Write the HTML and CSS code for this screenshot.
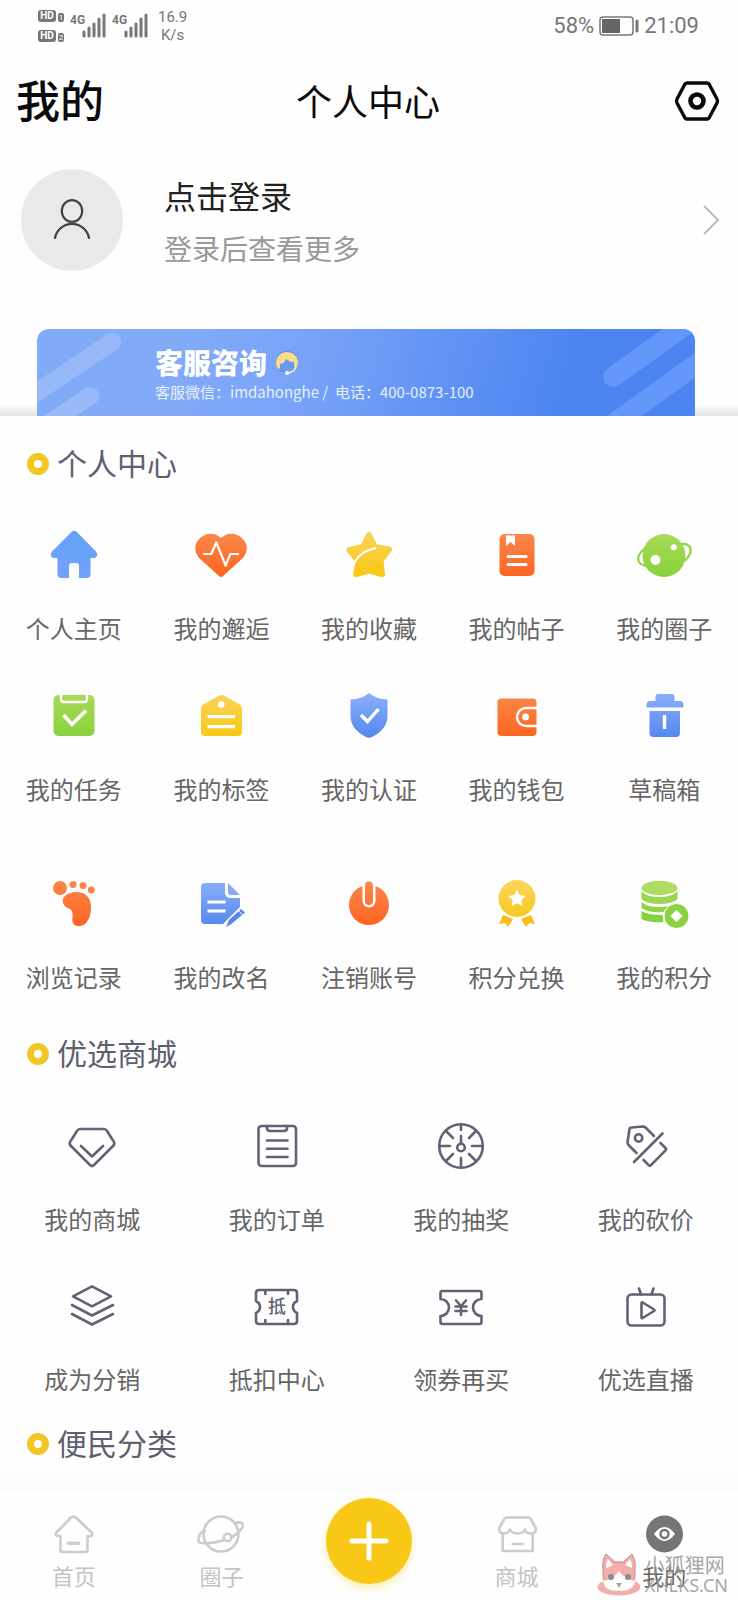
FILE: index.html
```html
<!DOCTYPE html>
<html lang="zh-CN">
<head>
<meta charset="utf-8">
<meta name="viewport" content="width=device-width, initial-scale=1">
<title>个人中心</title>
<link rel="stylesheet" href="styles.css">
</head>
<body>
<svg class="defs" width="0" height="0" aria-hidden="true">
  <defs>
    <linearGradient id="blue" x1="0" y1="0" x2="0" y2="56" gradientUnits="userSpaceOnUse"><stop offset="0" stop-color="#92b3fa"/><stop offset="1" stop-color="#4d82ee"/></linearGradient>
    <linearGradient id="sky" x1="0" y1="0" x2="0" y2="56" gradientUnits="userSpaceOnUse"><stop offset="0" stop-color="#5ea4f8"/><stop offset="1" stop-color="#77a0fb"/></linearGradient>
    <linearGradient id="orange" x1="0" y1="0" x2="0" y2="56" gradientUnits="userSpaceOnUse"><stop offset="0" stop-color="#fb8c50"/><stop offset="1" stop-color="#fd5f1b"/></linearGradient>
    <linearGradient id="yellow" x1="0" y1="0" x2="0" y2="56" gradientUnits="userSpaceOnUse"><stop offset="0" stop-color="#fad662"/><stop offset="1" stop-color="#f8c50b"/></linearGradient>
    <linearGradient id="green" x1="0" y1="0" x2="0" y2="56" gradientUnits="userSpaceOnUse"><stop offset="0" stop-color="#aedb5d"/><stop offset="1" stop-color="#83d138"/></linearGradient>
  </defs>
</svg>
<div class="page">
  <div class="status">
    <div class="hd"><span><b>HD</b><i>1</i></span><span><b>HD</b><i>2</i></span></div>
    <div class="signal"><span>4G</span><svg width="24" height="24" viewBox="0 0 24 24"><path d="M2 18v4M7 14v8M12 10v12M17 5v17M22 1v21"/></svg></div>
    <div class="signal"><span>4G</span><svg width="24" height="24" viewBox="0 0 24 24"><path d="M2 18v4M7 14v8M12 10v12M17 5v17M22 1v21"/></svg></div>
    <div class="speed">16.9<br>K/s</div>
    <div class="power"><span>58%</span>
      <svg width="40" height="20" viewBox="0 0 40 20"><rect x="1" y="1" width="33" height="18" rx="3" fill="none" stroke="#777" stroke-width="1.5"/><rect x="3" y="3" width="18" height="14" fill="#666"/><path d="M38 5v10" stroke="#777" stroke-width="3" stroke-linecap="round"/></svg>
      <span>21:09</span></div>
  </div>

  <header class="header">
    <div class="header-name">我的</div>
    <h1>个人中心</h1>
    <button class="settings" aria-label="设置"><svg width="46" height="42" viewBox="0 0 46 42" fill="none" stroke="#0a0a0a" stroke-linejoin="round"><path d="M13 3h20q1 0 2 1l8 15q1 2 0 4l-8 15q-1 1-2 1H13q-1 0-2-1L3 23q-1-2 0-4l8-15q1-1 2-1z" stroke-width="3.4"/><circle cx="23" cy="21" r="6.500" stroke-width="4.600"/></svg></button>
  </header>

  <a class="profile" href="#login">
    <span class="avatar"><svg width="42" height="44" viewBox="0 0 42 44" fill="none" stroke="#444" stroke-width="2.2" stroke-linecap="round"><ellipse cx="21" cy="13" rx="10.2" ry="10.8"/><path d="M4 40a17.300 17.300 0 0 1 34 0"/></svg></span>
    <span class="who"><strong>点击登录</strong><span>登录后查看更多</span></span>
    <svg class="arrow" width="18" height="32" viewBox="0 0 18 32" fill="none" stroke="#bbb" stroke-width="2"><path d="M2 2l14 14L2 30"/></svg>
  </a>

  <section class="banner-wrap">
    <div class="banner">
      <svg class="stripes left" width="90" height="87" viewBox="0 0 90 87" stroke="#97b9fa" stroke-width="18" stroke-linecap="round"><path d="M75 13L-25 80M53 67L-25 119"/></svg>
      <svg class="stripes right" width="100" height="87" viewBox="0 0 100 87" stroke="#6397fa" stroke-width="20" stroke-linecap="round"><path d="M18 48L110-18M14 98L114 26"/></svg>
      <div class="banner-title"><span>客服咨询</span>
        <svg width="24" height="26" viewBox="0 0 24 26"><circle cx="12" cy="13" r="11" fill="#5d92e9"/><path d="M1 14a11 11 0 0 1 22 0l-2 6q-2 0-2-7-5 0-8-3-1 5-6 5v5Q1 19 1 14z" fill="#fbdc8a"/><path d="M5 15q5 0 6-5 3 4 8 3 0 9-7 10-6-1-7-8z" fill="#6b9af0"/><path d="M21 17q-1 6-8 7" fill="none" stroke="#fbe7b8" stroke-width="1.6"/><circle cx="12" cy="24" r="2" fill="#fff"/></svg>
      </div>
      <p>客服微信：imdahonghe /&nbsp; 电话：400-0873-100</p>
    </div>
  </section>

  <main>
    <h2>个人中心</h2>
    <ul class="grid five">
      <li><a href="#"><svg viewBox="0 0 56 56"><path fill="url(#sky)" d="M25.500 5q2.700-2.500 5.400 0L50 24.500q3 4-1 6.500h-4.500v16q0 4-4 4H33V39q0-3-3-3h-4q-3 0-3 3v12h-7.500q-4 0-4-4V31H7q-4-2.500-1-6.500z"/></svg>个人主页</a></li>
      <li><a href="#"><svg viewBox="0 0 56 56"><path fill="url(#orange)" d="M28 11C34 5 43 5.500 49 11q9 9 1 20L30 49q-2 2-4 0L6 31Q-2 20 7 11c6-5.500 15-6 21 0z"/><path d="M11 27h7.300l5-11.500 9.300 23L37.300 27H45" fill="none" stroke="#fff" stroke-width="2.200" stroke-linejoin="round" stroke-linecap="round"/></svg>我的邂逅</a></li>
      <li><a href="#"><svg viewBox="0 0 56 56"><path fill="url(#yellow)" stroke="url(#yellow)" stroke-width="6" stroke-linejoin="round" d="M28 8l6 12L48 22.500l-8.500 11L41 47l-13-3.500L15 47l2-13L8.500 23 22 20z"/><path d="M11 46q1-20 24-25" fill="none" stroke="#fff" stroke-width="2"/></svg>我的收藏</a></li>
      <li><a href="#"><svg viewBox="0 0 56 56"><rect x="10.500" y="7" width="35" height="42" rx="5" fill="url(#orange)"/><path d="M17 8.500h9V19l-4.500-4L17 19z" fill="#fff"/><path d="M19 29.500h18M19 37.500h18" stroke="#fff" stroke-width="3" stroke-linecap="round"/></svg>我的帖子</a></li>
      <li><a href="#"><svg viewBox="0 0 56 56"><circle cx="28" cy="28.500" r="21.500" fill="url(#green)"/><g fill="none" stroke="#8ed443" stroke-width="2.200"><path d="M8 22q-7 6-5.500 12 1 4 9.500 5M45 17q7-1 9.500 4 1.500 6-6 13"/></g><circle cx="19.500" cy="33" r="5" fill="#fff"/><circle cx="37.800" cy="20.300" r="3" fill="#fff"/></svg>我的圈子</a></li>
      <li><a href="#"><svg viewBox="0 0 56 56"><rect x="7.500" y="7" width="41" height="41" rx="5" fill="url(#green)"/><path d="M15 7v4q0 3 3 3h20q3 0 3-3V7" fill="none" stroke="#fff" stroke-width="2.400"/><path d="M17.500 27l8.500 9.500L40 22.500" fill="none" stroke="#fff" stroke-width="3.600"/></svg>我的任务</a></li>
      <li><a href="#"><svg viewBox="0 0 56 56"><path fill="url(#yellow)" d="M25.500 8q3-2 6 0L46 16q3 1.500 3 5v23q0 4-4 4H12q-4 0-4-4V21q0-3.500 3-5z"/><circle cx="28.300" cy="16.500" r="3.300" fill="#fff"/><path d="M14.500 28.700H42M14.500 38.700H42" stroke="#fff" stroke-width="3.200"/></svg>我的标签</a></li>
      <li><a href="#"><svg viewBox="0 0 56 56"><path fill="url(#blue)" d="M28 5q7 6 18.500 6.500V28q0 13-15.500 21-3 1.500-6 0Q9.500 41 9.500 28V11.500Q21 11 28 5z"/><path d="M20 27l6.500 6.500L37.500 21" fill="none" stroke="#fff" stroke-width="3.400"/></svg>我的认证</a></li>
      <li><a href="#"><svg viewBox="0 0 56 56"><rect x="8.500" y="10.500" width="39" height="37.500" rx="4" fill="url(#orange)"/><path d="M48 20H37a9 9 0 0 0 0 18h11" fill="none" stroke="#fff" stroke-width="2.400"/><circle cx="36.500" cy="29" r="3.500" fill="#fff"/></svg>我的钱包</a></li>
      <li><a href="#"><svg viewBox="0 0 56 56"><path fill="url(#blue)" d="M19.500 13V9q0-3 3-3h13q3 0 3 3v4h5q4 0 4 4v2.500h-37V17q0-4 4-4zM13.500 23h30.500v22q0 4-4 4H17.500q-4 0-4-4z"/><path d="M28.500 27v14" stroke="#fff" stroke-width="3.400"/></svg>草稿箱</a></li>
    </ul>
    <ul class="grid five last">
      <li><a href="#"><svg viewBox="0 0 56 56" fill="url(#orange)"><circle cx="14" cy="12" r="7"/><circle cx="27" cy="8.500" r="3.500"/><circle cx="37" cy="9.500" r="3.500"/><circle cx="45.300" cy="14" r="3.400"/><path d="M30 16c10 0 15 6 15 15 0 7-2 13-6 17-4 3-10 3-12-1-2-5 2-10-3-14-8-2-9-10-5-13 3-3 7-4 11-4z"/></svg>浏览记录</a></li>
      <li><a href="#"><svg viewBox="0 0 56 56"><path fill="url(#blue)" d="M12 7h20v9q0 6 6 6h9v9L30 48H12q-4 0-4-4V11q0-4 4-4z"/><path d="M35 7l12 12h-9q-3 0-3-3z" fill="#88a9f6"/><path d="M14.500 26h18M14.500 35h18" stroke="#fff" stroke-width="2.800"/><path d="M33 51l3-7 12-11 4 3.500-13 11z" fill="#5486ee"/><path d="M45.500 34.500l4 4.500" stroke="#fff"/></svg>我的改名</a></li>
      <li><a href="#"><svg viewBox="0 0 56 56"><circle cx="28" cy="29" r="20" fill="url(#orange)"/><path d="M21.500 5v20a6.500 6.500 0 0 0 13 0V5z" fill="#fff"/><path d="M24 9.500a4 4 0 0 1 8 0V25a4 4 0 0 1-8 0z" fill="url(#orange)"/></svg>注销账号</a></li>
      <li><a href="#"><svg viewBox="0 0 56 56"><circle cx="28" cy="22.500" r="18.500" fill="url(#yellow)"/><path d="M28 13.500l2.700 5.500 6 .9-4.300 4.200 1 6-5.400-2.900-5.400 2.900 1-6-4.300-4.200 6-.9z" fill="#fff"/><path fill="#f9bd18" d="M14 39l10 4-5 8-3-4-6 1zM42 39l-10 4 5 8 3-4 6 1z"/></svg>积分兑换</a></li>
      <li><a href="#"><svg viewBox="0 0 56 56"><ellipse cx="23.500" cy="12" rx="18" ry="7.200" fill="#afdc61"/><path fill="#9cd650" d="M5.500 15q5 6 18 6t18-6v8q-5 5-18 5t-18-5z"/><path fill="#90d446" d="M5.500 26q5 5 18 5 9 0 15-3-8 2-11 8-16 1-22-4z"/><path fill="#86cf3d" d="M5.500 35q6 4 21 4l1 7q-14 1-22-3z"/><circle cx="40.500" cy="40" r="12.500" fill="#8ad243" stroke="#fff" stroke-width="1"/><path d="M40.500 34l6 6-6 6-6-6z" fill="#fff"/></svg>我的积分</a></li>
    </ul>

    <h2>优选商城</h2>
    <ul class="grid four line">
      <li><a href="#"><svg viewBox="0 0 56 56"><path d="M16 11h24q2 0 3 2l7 11q1 2-1 4L30 47q-2 2-4 0L7 28q-2-2-1-4l7-11q1-2 3-2zM17 28l11 10.500L39 28"/></svg>我的商城</a></li>
      <li><a href="#"><svg viewBox="0 0 56 56"><rect x="9.500" y="8" width="37.500" height="40" rx="3"/><path d="M18 8v2q0 3 3 3h14q3 0 3-3V8M18 22.500h20.500M18 30.700h20.500M18 39h20.500"/></svg>我的订单</a></li>
      <li><a href="#"><svg viewBox="0 0 56 56"><circle cx="28" cy="28" r="21.800"/><circle cx="28" cy="29.500" r="3.800"/><path d="M28 25.500V18M28 6v6M28 40v9M7 28h10M39 28h10M13 13l7 7M43 13l-7 7M13 43l7-7M43 43l-7-7"/></svg>我的抽奖</a></li>
      <li><a href="#"><svg viewBox="0 0 56 56"><path d="M36 18l-8.500-8.500q-1-1-3-1l-11 1q-2 0-2 2L9.500 24q0 2 1 3l8 8M16 44l28.500-28.500M42.500 25l5 5q1.200 1.200 0 2.400L33 47.200q-1.200 1.200-2.400 0L25.600 42"/><circle cx="20.600" cy="20" r="3.700"/></svg>我的砍价</a></li>
      <li><a href="#"><svg viewBox="0 0 56 56"><path d="M28 8.300l19 10-19 10-19-10zM8 27l20 10.500L49 27M8 36l20 10.500L49 36"/></svg>成为分销</a></li>
      <li><a href="#"><svg viewBox="0 0 56 56"><path d="M10 12h35q3 0 3 3v8q-4 2-4 6t4 6v8q0 3-3 3H10q-3 0-3-3v-8q4-2 4-6t-4-6v-8q0-3 3-3zM16.300 12v4M39 12v4M16.300 46v-4M39 46v-4"/><text x="28" y="35" text-anchor="middle">抵</text></svg>抵扣中心</a></li>
      <li><a href="#"><svg viewBox="0 0 56 56"><path d="M9.500 13h37q2 0 2 2v6a8.500 8.500 0 0 0 0 17v6q0 2-2 2h-37q-2 0-2-2v-6a8.500 8.500 0 0 0 0-17v-6q0-2 2-2zM23 22.500l5 5.500 5-5.500M28 28v9M22.500 28.500h11M22.500 33h11"/></svg>领券再买</a></li>
      <li><a href="#"><svg viewBox="0 0 56 56"><rect x="9.500" y="16.500" width="37" height="31" rx="4"/><path d="M21 10.500l2 6M35.500 10.500l-2 6M23.500 25v14.500q0 1 1.200.5L36 33q1-.7 0-1.500L24.700 24.500q-1.200-.5-1.200.5z"/></svg>优选直播</a></li>
    </ul>

    <h2>便民分类</h2>
  </main>

  <div class="strip"></div>
  <nav class="tabs">
    <a href="#"><svg viewBox="0 0 40 40"><path d="M16.500 4q3-3 6 0L38 19q1 3-2 3h-2.500v14q0 2-2 2h-23q-2 0-2-2V22H4q-3 0-2-3z"/><path d="M14.500 29.300h10" stroke-width="3.500"/></svg>首页</a>
    <a href="#"><svg viewBox="0 0 40 40"><circle cx="20" cy="20" r="17.500"/><path d="M4 17q-3 0-5 3-4 9 2 9 9 1 21-2.500M34 9q7-2 8 2 0 5-11 12"/><circle cx="26.600" cy="23.500" r="3.800"/></svg>圈子</a>
    <button class="add" aria-label="发布"><svg width="44" height="44" viewBox="0 0 44 44"><path d="M22 5v34M5 22h34" stroke="#fff" stroke-width="5" stroke-linecap="round"/></svg></button>
    <a href="#"><svg viewBox="0 0 40 40"><path d="M10 3.500h21q2 0 3 2l5 9q0 5-5 5-5 0-6-4-2 4-7.500 4t-7.500-4q-2 4-6 4-5 0-5-5l5-9q1-2 3-2zM5.700 20v17h30V20M15.500 30h10"/></svg>商城</a>
    <a class="current" href="#"><svg viewBox="0 0 40 40"><circle cx="20.500" cy="20" r="18.500" fill="#757575"/><path d="M10 20q10.500-14 21 0-10.500 14-21 0z" fill="#fff" stroke="none"/><circle cx="20.500" cy="20" r="4" fill="#fff" stroke="#757575" stroke-width="2.400"/></svg>我的</a>
    <div class="watermark">
      <svg width="44" height="44" viewBox="0 0 44 44"><ellipse cx="22" cy="35" rx="21.500" ry="8.500" fill="#f2a19d"/><path d="M6 17Q5 7 9 2l9 8h8l9-8q4 6 3 15 2 21-16 22Q4 38 6 17z" fill="#f2a19d" stroke="#b87a76"/><path d="M9 16q0-6 2-9l5 6zM35 16q0-6-2-9l-5 6z" fill="#fff"/><path d="M6 29q9-1 16-10 7 9 16 10-1 10-16 10T6 29z" fill="#fff"/><circle cx="14" cy="25" r="3" fill="#777"/><circle cx="31" cy="25" r="3" fill="#777"/><path d="M19 31h6l-3 5z" fill="#999"/></svg>
      <span>小狐狸网<small>XHLKS.CN</small></span>
    </div>
  </nav>
</div>
</body>
</html>
```
FILE: styles.css
```css
*, *::before { box-sizing: border-box; }
body {
  margin: 0;
  background: #fefefe;
  color: #666;
  font-family: "Noto Sans CJK SC", sans-serif;
}
ul, h1, h2, p { margin: 0; padding: 0; font-weight: 400; list-style: none; }
a { color: inherit; text-decoration: none; }
button { border: 0; padding: 0; background: none; display: flex; }
svg { display: block; flex: none; overflow: visible; }
.defs { position: absolute; }
.page { display: flex; flex-direction: column; min-height: 100vh; }

.status {
  display: flex;
  align-items: center;
  height: 52px;
  padding: 0 39px 0 38px;
  color: #777;
  font-family: Roboto, sans-serif;
}
.hd { display: flex; flex-direction: column; gap: 8px; margin-right: 6px; }
.hd span { display: flex; align-items: flex-end; gap: 2px; height: 12px; }
.hd b { width: 18px; height: 12px; border-radius: 3px; background: #777; color: #fff; font-size: 10px; line-height: 12px; text-align: center; }
.hd i { width: 6px; height: 9px; border-radius: 2px; background: #777; color: #fff; font-size: 8px; line-height: 9px; font-style: normal; text-align: center; }
.signal { display: flex; align-items: flex-start; margin-right: 6px; }
.signal span { width: 12px; font-size: 12px; line-height: 12px; font-weight: 700; }
.signal svg { stroke: #777; stroke-width: 3; stroke-linecap: round; }
.speed { font-size: 15px; line-height: 18px; margin-left: 4px; text-align: center; }
.power { display: flex; align-items: center; gap: 5px; margin-left: auto; font-size: 22px; line-height: 28px; }

.header {
  display: grid;
  grid-template-columns: 1fr auto 1fr;
  align-items: center;
  height: 98px;
  padding: 0 18px 0 16px;
  color: #0a0a0a;
}
.header-name { padding-bottom: 4px; font-size: 44px; line-height: 60px; font-weight: 500; }
.header h1 { padding-bottom: 2px; font-size: 36px; line-height: 52px; }
.settings { justify-self: end; }

.profile { display: flex; align-items: center; padding: 19px 18px 0 21px; }
.avatar { display: flex; align-items: center; justify-content: center; width: 102px; height: 102px; border-radius: 50%; background: #e9e9e9; }
.who { display: flex; flex-direction: column; gap: 8px; margin-left: 41px; color: #999; font-size: 28px; line-height: 42px; }
.who strong { color: #222; font-size: 32px; line-height: 48px; font-weight: 400; }
.arrow { margin-left: auto; }

.banner-wrap { padding: 58px 43px 0 37px; background: linear-gradient(to top, #e3e4e8, #fefefe 12px); }
.banner {
  position: relative;
  overflow: hidden;
  height: 87px;
  padding: 13px 0 0 118px;
  border-radius: 12px 12px 0 0;
  background: linear-gradient(105deg, #82abf7 20%, #79a3f8 40%, #4c85f1 80%);
  color: #fff;
}
.stripes { position: absolute; top: 0; }
.left { left: 0; }
.right { right: 0; }
.banner-title { position: relative; display: flex; align-items: center; gap: 8px; font-size: 28px; line-height: 40px; font-weight: 900; }
.banner p { position: relative; font-size: 15px; line-height: 20px; color: #e8f0ff; }

main { padding-top: 20px; background: #fefefe; }
h2 { display: flex; align-items: center; gap: 8px; height: 56px; padding: 0 0 4px 27px; color: #5f5f70; font-size: 30px; line-height: 44px; }
h2::before { content: ""; width: 22px; height: 22px; margin-top: 4px; border: 7px solid #f2c725; border-radius: 50%; }
.grid { display: grid; padding: 35px 0 0; row-gap: 42px; }
.five { grid-template-columns: repeat(5, 1fr); }
.four { grid-template-columns: repeat(4, 1fr); row-gap: 41px; padding: 36px 0 19px; }
.last { padding: 69px 0 31px; }
.grid a { display: flex; flex-direction: column; align-items: center; gap: 27px; font-size: 24px; line-height: 36px; }
.grid svg { width: 56px; height: 56px; }
.line svg { fill: none; stroke: #626275; stroke-width: 2.6; stroke-linejoin: round; stroke-linecap: round; }
.line text { fill: #626275; stroke: none; font-size: 18px; font-weight: 500; }

.strip { height: 18px; background: #fbfbfb; }
.tabs {
  position: relative;
  display: grid;
  grid-template-columns: repeat(5, 1fr);
  align-items: center;
  height: 110px;
  background: #fefefe;
  color: #c4c4c4;
  font-size: 22px;
  line-height: 30px;
}
.tabs a { display: flex; flex-direction: column; align-items: center; gap: 6px; padding-top: 14px; }
.tabs a svg { width: 40px; height: 40px; fill: none; stroke: #ccc; stroke-width: 2.6; stroke-linejoin: round; stroke-linecap: round; }
.tabs .current { color: #666; }
.tabs .current svg { stroke: none; }
.add { justify-self: center; align-items: center; justify-content: center; width: 86px; height: 86px; margin-bottom: 8px; border-radius: 50%; background: #f9c817; box-shadow: 0 4px 8px #f9c81755; }
.watermark { position: absolute; right: 10px; bottom: 4px; display: flex; align-items: center; gap: 4px; color: #999; font-size: 20px; line-height: 22px; opacity: 0.85; }
.watermark small { display: block; font: 18px/18px "Noto Sans", sans-serif; }
```
